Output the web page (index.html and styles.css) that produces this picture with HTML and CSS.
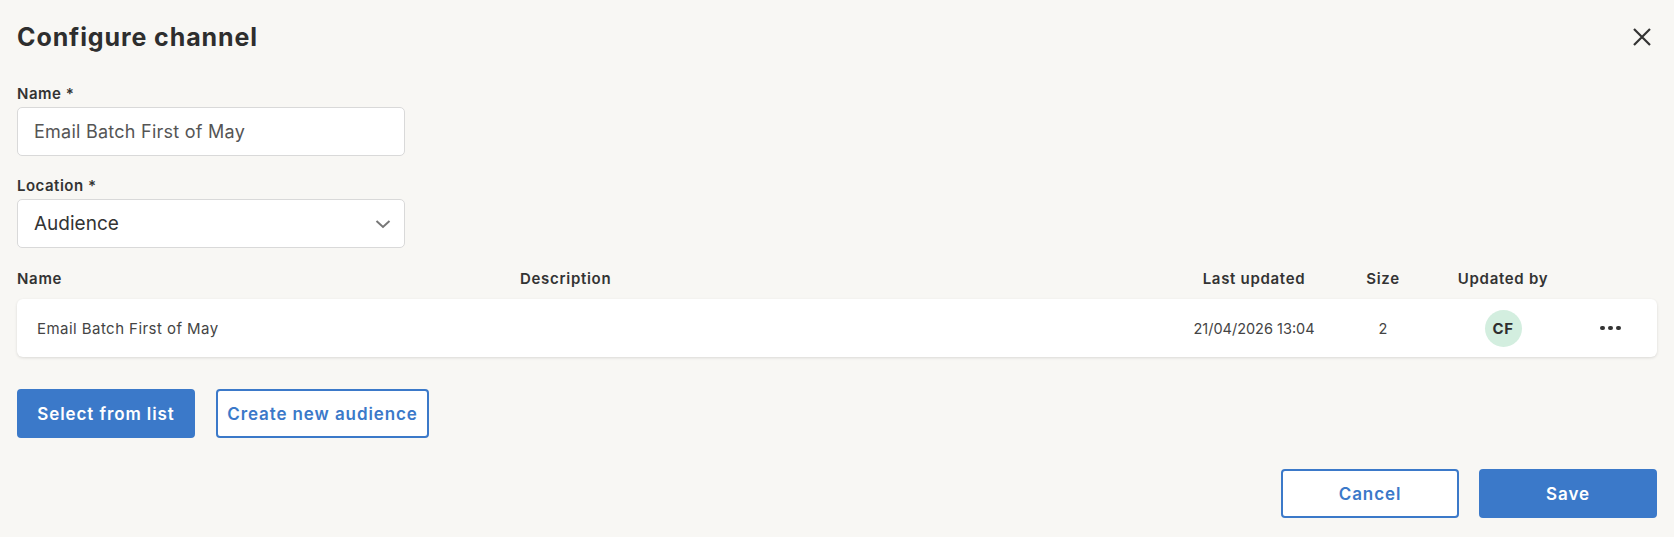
FILE: index.html
```html
<!DOCTYPE html>
<html lang="en">
<head>
<meta charset="utf-8">
<title>Configure channel</title>
<link rel="stylesheet" href="styles.css">
</head>
<body>
<div class="dialog">
  <header class="dialog-header">
    <h1 class="title">Configure channel</h1>
    <button class="close" aria-label="Close">
      <svg width="20" height="20" viewBox="0 0 20 20"><path d="M2 2 L18 18 M18 2 L2 18" stroke="#333" stroke-width="2.2" fill="none" stroke-linecap="butt"/></svg>
    </button>
  </header>

  <div class="field">
    <label class="label">Name *</label>
    <div class="input">Email Batch First of May</div>
  </div>

  <div class="field field-second">
    <label class="label">Location *</label>
    <div class="input select">
      <span>Audience</span>
      <svg width="16" height="10" viewBox="0 0 16 10"><path d="M1.5 2 L8 8 L14.5 2" stroke="#777" stroke-width="2" fill="none"/></svg>
    </div>
  </div>

  <div class="table">
    <div class="thead">
      <div class="c-name">Name</div>
      <div class="c-desc">Description</div>
      <div class="c-center">Last updated</div>
      <div class="c-center">Size</div>
      <div class="c-center">Updated by</div>
      <div></div>
    </div>
    <div class="trow">
      <div class="c-name cell-name">Email Batch First of May</div>
      <div class="c-desc"></div>
      <div class="c-center cell-date">21/04/2026 13:04</div>
      <div class="c-center cell-date">2</div>
      <div class="c-center"><span class="avatar">CF</span></div>
      <div class="c-center"><span class="dots"><i></i><i></i><i></i></span></div>
    </div>
  </div>

  <div class="actions">
    <button class="btn btn-primary btn-select">Select from list</button>
    <button class="btn btn-outline btn-create">Create new audience</button>
  </div>

  <div class="footer">
    <button class="btn btn-outline btn-wide">Cancel</button>
    <button class="btn btn-primary btn-wide">Save</button>
  </div>
</div>
</body>
</html>
```

FILE: styles.css
```css
* { box-sizing: border-box; }
html, body { margin: 0; padding: 0; }
body {
  background: #f8f7f4;
  font-family: Inter, "Noto Sans", sans-serif;
  color: #333;
  width: 1674px;
  height: 537px;
  overflow: hidden;
}
.dialog {
  padding: 0 17px;
}
.dialog-header {
  height: 74px;
  display: flex;
  align-items: center;
  justify-content: space-between;
}
.title {
  margin: 0;
  font-size: 25px;
  font-weight: 700;
  line-height: 1;
  color: #2e2e2e;
  letter-spacing: 0.9px;
}
.close {
  background: none;
  border: none;
  padding: 0;
  margin-right: 5px;
  width: 20px;
  height: 20px;
  display: flex;
}
.field { display: flex; flex-direction: column; }
.field:first-of-type { margin-top: 11px; }
.field-second { margin-top: 21px; }
.label {
  font-size: 15px;
  font-weight: 600;
  line-height: 18px;
  color: #333;
  margin-bottom: 4px;
  letter-spacing: 0.5px;
}
.input {
  width: 388px;
  height: 49px;
  background: #fff;
  border: 1px solid #d9d9d9;
  border-radius: 5px;
  padding: 0 16px;
  display: flex;
  align-items: center;
  font-size: 18px;
  letter-spacing: 0.25px;
  color: #555;
}
.select {
  justify-content: space-between;
  color: #333;
  font-size: 19px;
  letter-spacing: 0;
  padding-right: 13px;
}
.table { margin-top: 12px; }
.thead, .trow {
  display: grid;
  grid-template-columns: 503px 1fr 140px 118px 122px 93px;
  align-items: center;
}
.thead {
  height: 36px;
  font-size: 15px;
  font-weight: 600;
  letter-spacing: 0.7px;
  color: #333;
}
.trow {
  margin-top: 3px;
  height: 58px;
  background: #fff;
  border-radius: 6px;
  box-shadow: 0 1px 3px rgba(0,0,0,0.12);
  font-size: 15px;
  letter-spacing: 0.45px;
  color: #444;
}
.cell-date { font-size: 14.5px; letter-spacing: 0; }
.cell-name { padding-left: 20px; }
.c-center { text-align: center; display: flex; justify-content: center; align-items: center; }
.avatar {
  width: 37px;
  height: 37px;
  border-radius: 50%;
  background: #d3eedf;
  color: #2e2e2e;
  font-weight: 700;
  font-size: 15px;
  letter-spacing: 0.5px;
  display: flex;
  align-items: center;
  justify-content: center;
}
.dots { display: flex; gap: 3.5px; }
.dots i {
  width: 4.5px; height: 4.5px; border-radius: 50%; background: #333; display: block;
}
.actions {
  margin-top: 32px;
  display: flex;
  gap: 21px;
}
.btn {
  height: 49px;
  border-radius: 4px;
  font-family: inherit;
  font-size: 17px;
  font-weight: 600;
  letter-spacing: 0.9px;
  padding: 0;
  cursor: pointer;
}
.btn-primary {
  background: #3b79c9;
  border: 2px solid #3b79c9;
  color: #fff;
}
.btn-outline {
  background: #fff;
  border: 2px solid #3b79c9;
  color: #3b79c9;
}
.btn-select { width: 178px; }
.btn-create { width: 213px; }
.footer {
  margin-top: 31px;
  display: flex;
  justify-content: flex-end;
  gap: 20px;
}
.btn-wide { width: 178px; }
```
